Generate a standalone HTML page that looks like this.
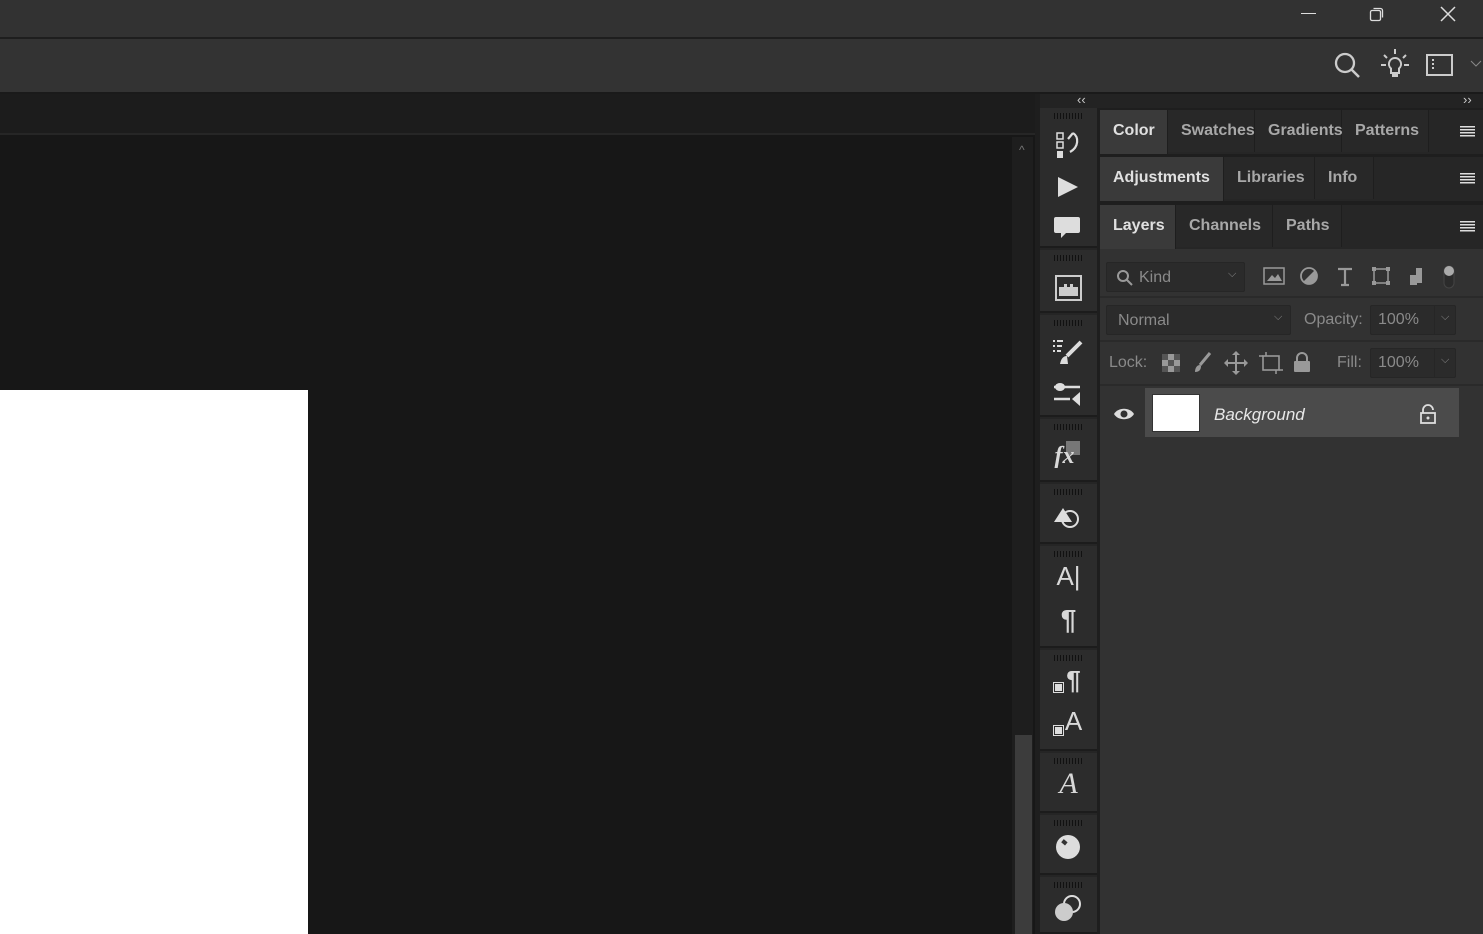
<!DOCTYPE html><html><head><style>
*{margin:0;padding:0;box-sizing:border-box}
body{width:1483px;height:934px;overflow:hidden;background:#171717;font-family:"Liberation Sans",sans-serif;position:relative}
.a{position:absolute}
.tab{position:absolute;top:0;height:42px;line-height:41px;font-size:16px;font-weight:bold;color:#a8a8a8;padding-left:13px;border-right:1px solid #1e1e1e;background:#282828}
.tab.on{background:#3a3a3a;color:#e0e0e0;height:44px}
.grp{position:absolute;left:1040px;width:57px;background:#2c2c2c;border-bottom:2px solid #1c1c1c}
.grip{position:absolute;left:14px;top:5px;width:28px;height:6px;background:repeating-linear-gradient(90deg,#111 0 1px,transparent 1px 3px)}
.ic{position:absolute;left:0;width:57px;text-align:center;color:#d8d8d8}
.menu{position:absolute;right:8px;width:15px;height:11px;background:repeating-linear-gradient(180deg,#ddd 0 1.5px,transparent 1.5px 3px)}
.box{position:absolute;background:#2b2b2b;border:1px solid #262626;border-radius:2px;color:#8a8a8a;font-size:16px;padding-left:11px}
.lbl{position:absolute;color:#8a8a8a;font-size:16px}
</style></head><body>
<div class="a" style="left:0;top:0;width:1483px;height:37px;background:#323232"></div>
<div class="a" style="left:0;top:37px;width:1483px;height:2px;background:#1e1e1e"></div>
<div class="a" style="left:0;top:39px;width:1483px;height:53px;background:#333"></div>
<div class="a" style="left:0;top:92px;width:1483px;height:2px;background:#1a1a1a"></div>
<div class="a" style="left:1301px;top:13px;width:15px;height:1px;background:#ddd"></div>
<svg class="a" style="left:1368px;top:5px" width="18" height="18"><rect x="2.5" y="5.5" width="10" height="10" rx="1.5" fill="none" stroke="#ddd" stroke-width="1.3"/><path d="M5.5 3.5h7a2 2 0 0 1 2 2v7" fill="none" stroke="#ddd" stroke-width="1.3"/></svg>
<svg class="a" style="left:1439px;top:5px" width="18" height="18"><path d="M2 2L16 16M16 2L2 16" stroke="#ddd" stroke-width="1.5"/></svg>
<svg class="a" style="left:1332px;top:50px" width="30" height="30"><circle cx="13" cy="13" r="9" fill="none" stroke="#ccc" stroke-width="2.3"/><path d="M19.5 19.5L27 27" stroke="#ccc" stroke-width="2.5"/></svg>
<svg class="a" style="left:1378px;top:47px" width="34" height="34"><path d="M17 2v5M6 8l3 3M28 8l-3 3M3 18h5M26 18h5" stroke="#ccc" stroke-width="2"/><path d="M17 11a6 6 0 0 0-4 10.5V26h8v-4.5A6 6 0 0 0 17 11z" fill="none" stroke="#ccc" stroke-width="2"/><rect x="14" y="26" width="6" height="4" fill="#ccc"/></svg>
<svg class="a" style="left:1425px;top:53px" width="30" height="24"><rect x="2" y="2" width="25" height="20" fill="none" stroke="#ccc" stroke-width="2"/><path d="M8 6v12" stroke="#ccc" stroke-width="2" stroke-dasharray="2 2"/></svg>
<svg class="a" style="left:1470px;top:60px" width="12" height="8"><path d="M1 1l5 5 5-5" fill="none" stroke="#888" stroke-width="1"/></svg>
<div class="a" style="left:0;top:94px;width:1035px;height:41px;background:#1c1c1c;border-bottom:2px solid #262626"></div>
<div class="a" style="left:1012px;top:137px;width:21px;height:797px;background:#1e1e1e"></div>
<div class="a" style="left:1015px;top:735px;width:17px;height:199px;background:#3c3c3c"></div>
<div class="a" style="left:1019px;top:143px;color:#777;font-size:12px">^</div>
<div class="a" style="left:0;top:390px;width:308px;height:544px;background:#fff"></div>
<div class="a" style="left:1035px;top:94px;width:448px;height:840px;background:#1e1e1e"></div>
<div class="a" style="left:1040px;top:94px;width:443px;height:14px;background:#232323"></div>
<div class="a" style="left:1077px;top:92px;color:#ccc;font-size:13px">‹‹</div>
<div class="a" style="left:1463px;top:92px;color:#ccc;font-size:13px">››</div>
<div class="a" style="left:1040px;top:108px;width:57px;height:826px;background:#252525"></div>
<div class="grp" style="top:108px;height:140px"><div class="grip"></div>
<svg class="ic" style="top:22px" width="57" height="32"><rect x="17" y="3" width="6" height="6" fill="none" stroke="#ddd" stroke-width="1.5"/><rect x="17" y="12" width="6" height="6" fill="none" stroke="#ddd" stroke-width="1.5"/><rect x="17" y="21" width="6" height="7" fill="#ddd"/><path d="M28 9l5-6M33 3c6 4 6 14-3 19" fill="none" stroke="#ddd" stroke-width="2.2"/></svg>
<svg class="ic" style="top:67px" width="57" height="24"><path d="M18 2v20l20-10z" fill="#ddd"/></svg>
<svg class="ic" style="top:107px" width="57" height="26"><path d="M16 2h22a2 2 0 0 1 2 2v12a2 2 0 0 1-2 2H26l-5 5v-5h-5a2 2 0 0 1-2-2V4a2 2 0 0 1 2-2z" fill="#ddd"/></svg></div>
<div class="grp" style="top:250px;height:63px"><div class="grip"></div>
<svg class="ic" style="top:22px" width="57" height="30"><rect x="16" y="4" width="25" height="24" fill="none" stroke="#ccc" stroke-width="2"/><path d="M19 24v-9h5v-3h3v3h3v-3h3v3h5v9z" fill="#ccc"/></svg></div>
<div class="grp" style="top:315px;height:102px"><div class="grip"></div>
<svg class="ic" style="top:22px" width="57" height="30"><path d="M13 4h2M17 4h6M13 9h2M17 9h5M13 14h2M17 14h4" stroke="#ddd" stroke-width="2"/><path d="M41 5L27 19" stroke="#ddd" stroke-width="4"/><path d="M27 19c-4 0-6 3-7 8h8z" fill="#ddd"/></svg>
<svg class="ic" style="top:66px" width="57" height="26"><path d="M14 6h26M14 18h16" stroke="#ddd" stroke-width="2.5"/><ellipse cx="20" cy="6" rx="5" ry="4" fill="#ddd"/><path d="M32 18l8-7v14z" fill="#ddd"/></svg></div>
<div class="grp" style="top:419px;height:63px"><div class="grip"></div>
<div class="a" style="left:26px;top:22px;width:14px;height:14px;background:#777"></div>
<div class="ic" style="top:24px;font:italic bold 24px 'Liberation Serif',serif;left:-4px">fx</div></div>
<div class="grp" style="top:484px;height:60px"><div class="grip"></div>
<svg class="ic" style="top:18px" width="57" height="28"><path d="M14 20l9-14 9 14z" fill="#ddd"/><circle cx="30" cy="17" r="8" fill="none" stroke="#ddd" stroke-width="2"/></svg></div>
<div class="grp" style="top:546px;height:102px"><div class="grip"></div>
<div class="ic" style="top:15px;font-size:26px">A<span style="font-weight:100">|</span></div>
<div class="ic" style="top:58px;font-size:28px;font-weight:bold">¶</div></div>
<div class="grp" style="top:650px;height:101px"><div class="grip"></div>
<div class="ic" style="top:15px;font-size:26px;font-weight:bold;left:5px">¶</div>
<div class="a" style="left:14px;top:33px;width:9px;height:9px;background:#ddd;border:1.5px solid #2c2c2c;outline:1.5px solid #ddd"></div>
<div class="ic" style="top:56px;font-size:26px;left:5px">A</div>
<div class="a" style="left:14px;top:76px;width:9px;height:9px;background:#ddd;border:1.5px solid #2c2c2c;outline:1.5px solid #ddd"></div></div>
<div class="grp" style="top:753px;height:60px"><div class="grip"></div>
<div class="ic" style="top:14px;font:italic 30px 'Liberation Serif',serif">A</div></div>
<div class="grp" style="top:815px;height:60px"><div class="grip"></div>
<svg class="ic" style="top:18px" width="57" height="28"><circle cx="28" cy="14" r="12" fill="#ddd"/><rect x="22" y="7" width="5" height="4" fill="#333" transform="rotate(40 24 9)"/></svg></div>
<div class="grp" style="top:877px;height:57px"><div class="grip"></div>
<svg class="ic" style="top:16px" width="57" height="30"><circle cx="32" cy="11" r="8" fill="none" stroke="#ddd" stroke-width="2"/><circle cx="24" cy="19" r="9" fill="#ccc"/></svg></div>
<div class="a" style="left:1100px;top:110px;width:383px;height:44px;background:#262626">
<div class="tab on" style="left:0;width:68px">Color</div><div class="tab" style="left:68px;width:87px">Swatches</div><div class="tab" style="left:155px;width:87px">Gradients</div><div class="tab" style="left:242px;width:87px">Patterns</div><div class="menu" style="top:16px"></div></div>
<div class="a" style="left:1100px;top:157px;width:383px;height:44px;background:#262626">
<div class="tab on" style="left:0;width:124px">Adjustments</div><div class="tab" style="left:124px;width:91px">Libraries</div><div class="tab" style="left:215px;width:59px">Info</div><div class="menu" style="top:16px"></div></div>
<div class="a" style="left:1100px;top:205px;width:383px;height:44px;background:#262626">
<div class="tab on" style="left:0;width:76px">Layers</div><div class="tab" style="left:76px;width:97px">Channels</div><div class="tab" style="left:173px;width:69px">Paths</div><div class="menu" style="top:16px"></div></div>
<div class="a" style="left:1100px;top:249px;width:383px;height:685px;background:#323232"></div>
<div class="a" style="left:1100px;top:296px;width:383px;height:2px;background:#2a2a2a"></div>
<div class="a" style="left:1100px;top:340px;width:383px;height:2px;background:#2a2a2a"></div>
<div class="a" style="left:1100px;top:384px;width:383px;height:2px;background:#2a2a2a"></div>
<div class="box" style="left:1106px;top:262px;width:139px;height:30px;line-height:30px;padding-left:32px">Kind</div>
<svg class="a" style="left:1116px;top:269px" width="18" height="18"><circle cx="7" cy="7" r="5" fill="none" stroke="#999" stroke-width="2"/><path d="M11 11l5 5" stroke="#999" stroke-width="2"/></svg>
<div class="lbl" style="left:1228px;top:268px;font-size:11px">⌵</div>
<svg class="a" style="left:1262px;top:265px" width="200" height="26"><rect x="2" y="3" width="20" height="16" fill="none" stroke="#999" stroke-width="1.5"/><path d="M5 16l5-6 3 3 3-4 4 7z" fill="#999"/><circle cx="47" cy="11" r="8" fill="none" stroke="#999" stroke-width="1.8"/><path d="M41 17L53 5A8 8 0 0 1 41 17z" fill="#999"/><path d="M76 4h14M83 4v16M79 20h8" stroke="#999" stroke-width="2.2"/><rect x="112" y="4" width="14" height="14" fill="none" stroke="#999" stroke-width="1.5"/><rect x="110" y="2" width="4" height="4" fill="#999"/><rect x="124" y="2" width="4" height="4" fill="#999"/><rect x="110" y="16" width="4" height="4" fill="#999"/><rect x="124" y="16" width="4" height="4" fill="#999"/><path d="M148 10h6V3h6v15h-6z M148 10h7v10h-7z" fill="#999"/><rect x="182" y="1" width="10" height="22" rx="5" fill="#2b2b2b" stroke="#444"/><circle cx="187" cy="6" r="5" fill="#aaa"/></svg>
<div class="box" style="left:1106px;top:305px;width:185px;height:30px;line-height:30px">Normal</div>
<div class="lbl" style="left:1274px;top:311px;font-size:11px">⌵</div>
<div class="lbl" style="left:1304px;top:311px">Opacity:</div>
<div class="box" style="left:1370px;top:305px;width:86px;height:30px;line-height:28px;padding-left:7px">100%</div>
<div class="a" style="left:1434px;top:306px;width:1px;height:28px;background:#262626"></div>
<div class="box" style="left:1370px;top:348px;width:86px;height:30px;line-height:28px;padding-left:7px">100%</div>
<div class="a" style="left:1434px;top:349px;width:1px;height:28px;background:#262626"></div>
<div class="lbl" style="left:1109px;top:354px">Lock:</div>
<svg class="a" style="left:1160px;top:350px" width="160" height="26"><rect x="2" y="4" width="18" height="18" fill="#999"/><path d="M2 4h6v6H2zM14 4h6v6h-6zM8 10h6v6H8zM2 16h6v6H2zM14 16h6v6h-6z" fill="#555"/><path d="M50 3L40 15" stroke="#999" stroke-width="3"/><path d="M40 15c-3 0-5 3-5 7 4 0 6-2 6-6z" fill="#999"/><path d="M76 3v20M66 13h20" stroke="#999" stroke-width="2"/><path d="M76 1l-4 4h8zM76 25l-4-4h8zM64 13l4-4v8zM88 13l-4-4v8z" fill="#999"/><rect x="103" y="6" width="16" height="14" fill="none" stroke="#999" stroke-width="1.6"/><path d="M99 6h4M119 20h4M106 2v4M116 20v4" stroke="#999" stroke-width="1.5"/><path d="M137 11v-3a5 5 0 0 1 10 0v3" fill="none" stroke="#999" stroke-width="2"/><rect x="134" y="11" width="16" height="11" rx="1" fill="#999"/></svg>
<div class="lbl" style="left:1337px;top:354px">Fill:</div>
<div class="lbl" style="left:1441px;top:311px;font-size:11px">⌵</div><div class="lbl" style="left:1441px;top:354px;font-size:11px">⌵</div>
<div class="a" style="left:1145px;top:388px;width:314px;height:49px;background:#4b4b4b"></div>
<div class="a" style="left:1153px;top:395px;width:46px;height:36px;background:#fff;outline:1px solid #333"></div>
<div class="a" style="left:1214px;top:405px;color:#e8e8e8;font-size:17px;font-style:italic">Background</div>
<svg class="a" style="left:1113px;top:405px" width="22" height="18"><path d="M1 9C5 2 17 2 21 9 17 16 5 16 1 9z" fill="#ddd"/><circle cx="11" cy="9" r="3.5" fill="#323232"/></svg>
<svg class="a" style="left:1418px;top:403px" width="20" height="22"><path d="M5 10V7a5 5 0 0 1 10 0" fill="none" stroke="#ddd" stroke-width="1.8"/><rect x="3" y="10" width="14" height="10" fill="none" stroke="#ddd" stroke-width="1.8"/><circle cx="10" cy="15" r="1.5" fill="#ddd"/></svg>
</body></html>
